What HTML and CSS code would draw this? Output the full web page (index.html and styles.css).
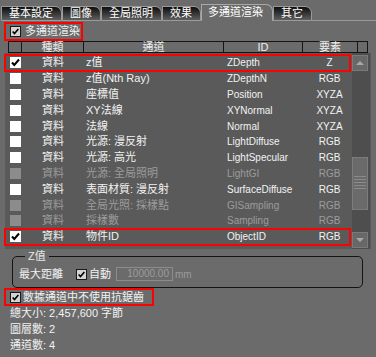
FILE: index.html
```html
<!DOCTYPE html>
<html>
<head>
<meta charset="utf-8">
<link rel="stylesheet" href="styles.css">
</head>
<body>
<div class="tabs">
  <div class="tab">基本設定</div>
  <div class="tab">圖像</div>
  <div class="tab">全局照明</div>
  <div class="tab">效果</div>
  <div class="tab active">多通道渲染</div>
  <div class="tab">其它</div>
  <div class="tab-fill"></div>
</div>
<div class="panel">
  <div class="cb-line hl first"><span class="cb"><svg viewBox="0 0 11 11"><path d="M2 5.5 L4.3 8 L9 2.5"/></svg></span><span>多通道渲染</span></div>
  <div class="table">
    <div class="thead">
      <div class="th c0"></div>
      <div class="th c1">種類</div>
      <div class="th c2">通道</div>
      <div class="th c3">ID</div>
      <div class="th c4">要素</div>
      <div class="th c5"></div>
    </div>
    <div class="tbody">
      <div class="rows">
        <div class="row hl"><span class="cell c0"><span class="box"><svg viewBox="0 0 11 11"><path d="M2 5.5 L4.3 8 L9 2.5"/></svg></span></span><span class="cell c1">資料</span><span class="cell c2">z值</span><span class="cell c3">ZDepth</span><span class="cell c4">Z</span></div>
        <div class="row"><span class="cell c0"><span class="box"></span></span><span class="cell c1">資料</span><span class="cell c2">z值(Nth Ray)</span><span class="cell c3">ZDepthN</span><span class="cell c4">RGB</span></div>
        <div class="row"><span class="cell c0"><span class="box"></span></span><span class="cell c1">資料</span><span class="cell c2">座標值</span><span class="cell c3">Position</span><span class="cell c4">XYZA</span></div>
        <div class="row"><span class="cell c0"><span class="box"></span></span><span class="cell c1">資料</span><span class="cell c2">XY法線</span><span class="cell c3">XYNormal</span><span class="cell c4">XYZA</span></div>
        <div class="row"><span class="cell c0"><span class="box"></span></span><span class="cell c1">資料</span><span class="cell c2">法線</span><span class="cell c3">Normal</span><span class="cell c4">XYZA</span></div>
        <div class="row"><span class="cell c0"><span class="box"></span></span><span class="cell c1">資料</span><span class="cell c2">光源: 漫反射</span><span class="cell c3">LightDiffuse</span><span class="cell c4">RGB</span></div>
        <div class="row"><span class="cell c0"><span class="box"></span></span><span class="cell c1">資料</span><span class="cell c2">光源: 高光</span><span class="cell c3">LightSpecular</span><span class="cell c4">RGB</span></div>
        <div class="row off"><span class="cell c0"><span class="box"></span></span><span class="cell c1">資料</span><span class="cell c2">光源: 全局照明</span><span class="cell c3">LightGI</span><span class="cell c4">RGB</span></div>
        <div class="row"><span class="cell c0"><span class="box"></span></span><span class="cell c1">資料</span><span class="cell c2">表面材質: 漫反射</span><span class="cell c3">SurfaceDiffuse</span><span class="cell c4">RGB</span></div>
        <div class="row off"><span class="cell c0"><span class="box"></span></span><span class="cell c1">資料</span><span class="cell c2">全局光照: 採樣點</span><span class="cell c3">GISampling</span><span class="cell c4">RGB</span></div>
        <div class="row off"><span class="cell c0"><span class="box"></span></span><span class="cell c1">資料</span><span class="cell c2">採樣數</span><span class="cell c3">Sampling</span><span class="cell c4">RGB</span></div>
        <div class="row hl"><span class="cell c0"><span class="box"><svg viewBox="0 0 11 11"><path d="M2 5.5 L4.3 8 L9 2.5"/></svg></span></span><span class="cell c1">資料</span><span class="cell c2">物件ID</span><span class="cell c3">ObjectID</span><span class="cell c4">RGB</span></div>
      </div>
      <div class="scroll">
        <div class="sbtn up"><span class="arrow-up"></span></div>
        <div class="track t1"></div>
        <div class="thumb"><span class="grip"></span></div>
        <div class="track t2"></div>
        <div class="sbtn down"><span class="arrow-down"></span></div>
      </div>
    </div>
  </div>
  <fieldset class="zgroup">
    <legend>Z值</legend>
    <div class="zrow">
      <span class="zlabel">最大距離</span>
      <span class="cb"><svg viewBox="0 0 11 11"><path d="M2 5.5 L4.3 8 L9 2.5"/></svg></span>
      <span class="auto">自動</span>
      <span class="input">10000.00</span>
      <span class="unit">mm</span>
    </div>
  </fieldset>
  <div class="cb-line hl second"><span class="cb"><svg viewBox="0 0 11 11"><path d="M2 5.5 L4.3 8 L9 2.5"/></svg></span><span>數據通道中不使用抗鋸齒</span></div>
  <div class="info">
    <div>總大小: 2,457,600 字節</div>
    <div>圖層數: 2</div>
    <div>通道數: 4</div>
  </div>
</div>
</body>
</html>
```
FILE: styles.css
```css
* { box-sizing: border-box; }
html, body { margin: 0; padding: 0; }
body {
  width: 376px;
  height: 357px;
  overflow: hidden;
  background: #6b6b6b;
  color: #f2f2f2;
  font-family: "Liberation Sans", "Noto Sans CJK TC", sans-serif;
  font-size: 11px;
  line-height: 13px;
}

/* tabs */
.tabs {
  display: flex;
  align-items: flex-end;
  height: 21px;
  padding-left: 1px;
}
.tab {
  height: 15px;
  line-height: 13px;
  padding: 0 8px 0 7px;
  color: #fff;
  background: linear-gradient(#0e0e0e, #5e5e5e);
  border: 1px solid #9a9a9a;
  border-bottom: 1px solid #9a9a9a;
  border-top-right-radius: 7px;
  white-space: nowrap;
}
.tab.active {
  height: 17px;
  line-height: 15px;
  background: #6b6b6b;
  border-color: #a8a8a8;
  border-bottom: none;
  padding: 0 9px 0 6px;
}
.tab-fill {
  width: 69px;
  height: 1px;
  background: #9a9a9a;
}

/* check line */
.cb-line {
  display: inline-flex;
  align-items: center;
  border: 2px solid #ff0000;
  height: 19px;
  margin: 1px 0 0 4px;
  padding-left: 4px;
}
.cb-line.first { padding-right: 1px; gap: 4px; }
.cb-line.second { height: 18px; margin-top: 0; padding-right: 8px; gap: 2px; }

.cb {
  display: inline-block;
  width: 11px;
  height: 11px;
  background: #d4d4d4;
  border: 1px solid #1a1a1a;
}
.cb svg, .box svg {
  display: block;
  width: 100%;
  height: 100%;
}
.cb svg path, .box svg path {
  fill: none;
  stroke: #000;
  stroke-width: 2;
}

/* table */
.table {
  margin: 0 5px 0 5px;
  width: 366px;
}
.thead {
  display: flex;
  height: 12px;
  padding-left: 3px;
}
.th {
  height: 12px;
  line-height: 10px;
  text-align: center;
  background: #6b6b6b;
  border-top: 1px solid #151515;
  border-bottom: 1px solid #151515;
  border-right: 1px solid #151515;
  color: #eee;
}
.th.c0 { width: 14px; border-left: 1px solid #151515; }
.th.c1 { width: 62px; }
.th.c2 { width: 140px; }
.th.c3 { width: 79px; }
.th.c4 { width: 55px; }
.th.c5 { width: 10px; }

.tbody {
  display: flex;
  height: 196px;
  background: #5a5a5a;
}
.rows {
  width: 345px;
  padding-top: 2px;
}
.row {
  display: flex;
  align-items: center;
  height: 15.8px;
}
.row.hl {
  outline: 2px solid #ff0000;
  outline-offset: -1px;
}
.cell { white-space: nowrap; }
.cell.c0 { width: 17px; padding-left: 5px; display: flex; align-items: center; }
.cell.c1 { width: 62px; text-align: center; }
.cell.c2 { width: 140px; padding-left: 2px; }
.cell.c3 { width: 79px; padding-left: 3px; font-size: 10px; }
.cell.c4 { width: 47px; padding-left: 6px; text-align: center; font-size: 10px; }

.box {
  display: block;
  width: 11px;
  height: 11px;
  background: #fff;
}
.row.off { color: #9c9c9c; }
.row.off .box { background: #8c8c8c; }

/* scrollbar */
.scroll {
  width: 18px;
  margin-left: 2px;
  display: flex;
  flex-direction: column;
  background: #4e4e4e;
}
.sbtn {
  width: 16px;
  height: 16px;
  background: #686868;
  border: 1px solid #7a7a7a;
  display: flex;
  align-items: center;
  justify-content: center;
}
.sbtn.up { margin-top: 2px; }
.arrow-up {
  width: 0; height: 0;
  border-left: 4px solid transparent;
  border-right: 4px solid transparent;
  border-bottom: 4px solid #a8a8a8;
}
.arrow-down {
  width: 0; height: 0;
  border-left: 4px solid transparent;
  border-right: 4px solid transparent;
  border-top: 4px solid #a8a8a8;
}
.track.t1 { height: 86px; }
.track.t2 { height: 22px; }
.thumb {
  width: 16px;
  height: 53px;
  background: #6a6a6a;
  border: 1px solid #7c7c7c;
  display: flex;
  align-items: center;
  justify-content: center;
}
.grip {
  display: block;
  width: 12px;
  height: 15px;
  background: repeating-linear-gradient(#8a8a8a 0 1px, transparent 1px 3px);
}

/* Z group */
.zgroup {
  margin: 1px 13px 0 12px;
  padding: 4px 6px 6px 6px;
  border: 1px solid #141414;
  border-radius: 5px;
}
.zgroup legend {
  padding: 0 3px;
  margin-left: 6px;
  line-height: 13px;
  color: #e8e8e8;
}
.zrow {
  display: flex;
  align-items: center;
  height: 14px;
}
.zlabel { width: 57px; }
.auto { margin-left: 2px; width: 27px; }
.input {
  width: 57px;
  height: 14px;
  line-height: 12px;
  border: 1px solid #8c8c8c;
  background: #6b6b6b;
  color: #9c9c9c;
  text-align: right;
  padding-right: 3px;
  font-size: 10px;
}
.unit {
  margin-left: 2px;
  color: #9c9c9c;
  font-size: 10px;
}

/* info */
.info {
  margin: -1px 0 0 10px;
  line-height: 16px;
}
```
